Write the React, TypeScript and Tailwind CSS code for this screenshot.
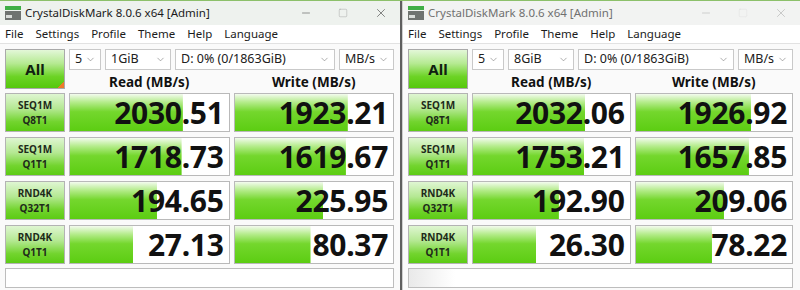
import { ChevronDown, Minus, Square, X } from 'lucide-react';

type Row = { l1: string; l2: string; read: string; write: string; rp: number; wp: number };

const leftRows: Row[] = [
  { l1: 'SEQ1M', l2: 'Q8T1', read: '2030.51', write: '1923.21', rp: 71, wp: 71.4 },
  { l1: 'SEQ1M', l2: 'Q1T1', read: '1718.73', write: '1619.67', rp: 70.2, wp: 70.2 },
  { l1: 'RND4K', l2: 'Q32T1', read: '194.65', write: '225.95', rp: 54.7, wp: 55.9 },
  { l1: 'RND4K', l2: 'Q1T1', read: '27.13', write: '80.37', rp: 39.8, wp: 47.8 },
];

const rightRows: Row[] = [
  { l1: 'SEQ1M', l2: 'Q8T1', read: '2032.06', write: '1926.92', rp: 71.4, wp: 73.7 },
  { l1: 'SEQ1M', l2: 'Q1T1', read: '1753.21', write: '1657.85', rp: 70.8, wp: 72.4 },
  { l1: 'RND4K', l2: 'Q32T1', read: '192.90', write: '209.06', rp: 54.7, wp: 56.4 },
  { l1: 'RND4K', l2: 'Q1T1', read: '26.30', write: '78.22', rp: 40.4, wp: 48.7 },
];

const menu = ['File', 'Settings', 'Profile', 'Theme', 'Help', 'Language'];

function AppIcon() {
  return (
    <svg width="16" height="14" viewBox="0 0 16 14">
      <rect x="0" y="0" width="16" height="4" fill="#3fae46" />
      <rect x="0" y="5" width="16" height="9" fill="#6f7370" />
      <rect x="1" y="9" width="6" height="3" fill="#d9dcd9" />
    </svg>
  );
}

function Select({ text, w }: { text: string; w: string }) {
  return (
    <div className={`${w} h-[21px] flex items-center justify-between bg-white border border-[#c9c9c9] pl-[5px] pr-[4px] text-[12.5px] text-[#202020]`}>
      <span>{text}</span>
      <ChevronDown size={11} strokeWidth={1.3} className="text-[#777]" />
    </div>
  );
}

function Meter({ value, pct }: { value: string; pct: number }) {
  return (
    <div
      className="h-[39px] border border-[#b9b9b9] bg-white bg-no-repeat bg-[linear-gradient(to_bottom,#f3fbee_0%,#b5ec8c_22%,#74d72d_48%,#5ccd12_100%)] flex items-center justify-end pr-[5px]"
      style={{ backgroundSize: `${pct}% 100%` }}
    >
      <span className="text-[30px] leading-none font-bold text-[#111] tracking-[-0.3px]">{value}</span>
    </div>
  );
}

function Label({ l1, l2 }: { l1: string; l2: string }) {
  return (
    <div className="h-[39px] border border-[#b3b3b3] bg-[linear-gradient(to_bottom,#dff6d2_0%,#b4e892_40%,#72d42e_75%,#5ccb14_100%)] flex flex-col items-center justify-center text-[10px] leading-[15px] font-bold text-[#1e2a1a]">
      <span>{l1}</span>
      <span>{l2}</span>
    </div>
  );
}

function Window({ size, rows, active, pr }: { size: string; rows: Row[]; active: boolean; pr: string }) {
  return (
    <div className="flex flex-col h-full bg-[#fafafa]">
      <div className={`h-[24px] flex items-center ${active ? 'bg-[#eef2ee]' : 'bg-[#f2f3f2]'}`}>
        <div className="pl-[5px] flex items-center gap-[4px] flex-1">
          <AppIcon />
          <span className={`text-[11.5px] ${active ? 'text-[#1b1b1b]' : 'text-[#707070]'}`}>CrystalDiskMark 8.0.6 x64 [Admin]</span>
        </div>
        <div className={`flex items-center ${active ? 'text-[#333]' : 'text-[#aaa]'}`}>
          <div className="w-[36px] flex justify-center"><Minus size={12} strokeWidth={1} /></div>
          <div className="w-[38px] flex justify-center"><Square size={10} strokeWidth={1} className={active ? 'text-[#999]' : 'text-[#ddd]'} /></div>
          <div className="w-[38px] flex justify-center"><X size={14} strokeWidth={1} /></div>
        </div>
      </div>
      <div className="h-[19px] flex items-center gap-[12px] bg-white border-b border-[#e2e2e2] pl-[5px] text-[11.5px] text-[#1b1b1b]">
        {menu.map((m) => (
          <span key={m}>{m}</span>
        ))}
      </div>
      <div className={`flex flex-col pt-[5px] pl-[5px] ${pr}`}>
        <div className="flex gap-[4px]">
          <div className="relative w-[60px] h-[40px] border border-[#a9a9a9] bg-[linear-gradient(to_bottom,#e3f7d8_0%,#b6ea93_35%,#6cd325_70%,#55c80c_100%)] flex items-center justify-center">
            <span className="text-[15px] font-bold text-[#102010]">All</span>
            {active && <div className="absolute right-0 bottom-0 w-[7px] h-[7px] bg-[linear-gradient(135deg,transparent_50%,#ee7a2a_50%)]" />}
          </div>
          <div className="flex-1 flex flex-col">
            <div className="flex gap-[4px]">
              <Select text="5" w="w-[32px]" />
              <Select text={size} w="w-[66px]" />
              <Select text="D: 0% (0/1863GiB)" w="flex-1" />
              <Select text="MB/s" w="w-[55px]" />
            </div>
            <div className="grid grid-cols-2 gap-[4px] h-[19px] items-end text-[13.5px] font-bold text-[#111] leading-none">
              <span className="text-center">Read (MB/s)</span>
              <span className="text-center">Write (MB/s)</span>
            </div>
          </div>
        </div>
        <div className="mt-[4px] grid grid-cols-[60px_1fr_1fr] gap-x-[4px] gap-y-[5px]">
          {rows.map((r, i) => (
            <div key={i} className="contents">
              <Label l1={r.l1} l2={r.l2} />
              <Meter value={r.read} pct={r.rp} />
              <Meter value={r.write} pct={r.wp} />
            </div>
          ))}
        </div>
        <div
          className={`mt-[4px] h-[20px] border border-[#bdbdbd] ${active ? 'bg-white' : 'bg-[linear-gradient(to_right,#e9e9e9_0%,#ffffff_12%)]'}`}
        />
      </div>
    </div>
  );
}

export default function App() {
  return (
    <div className="w-[800px] h-[290px] overflow-hidden flex flex-col bg-[#fafafa] font-['Noto_Sans','Open_Sans',sans-serif]">
      <div className="h-[1px] bg-[#8cc06a]" />
      <div className="flex flex-1 min-h-0">
        <div className="w-[400px]">
          <Window size="1GiB" rows={leftRows} active pr="pr-[6px]" />
        </div>
        <div className="w-[2px] bg-[#5f5f5f]" />
        <div className="flex-1 border-l border-[#cfcfcf]">
          <Window size="8GiB" rows={rightRows} active={false} pr="pr-[7px]" />
        </div>
      </div>
    </div>
  );
}
